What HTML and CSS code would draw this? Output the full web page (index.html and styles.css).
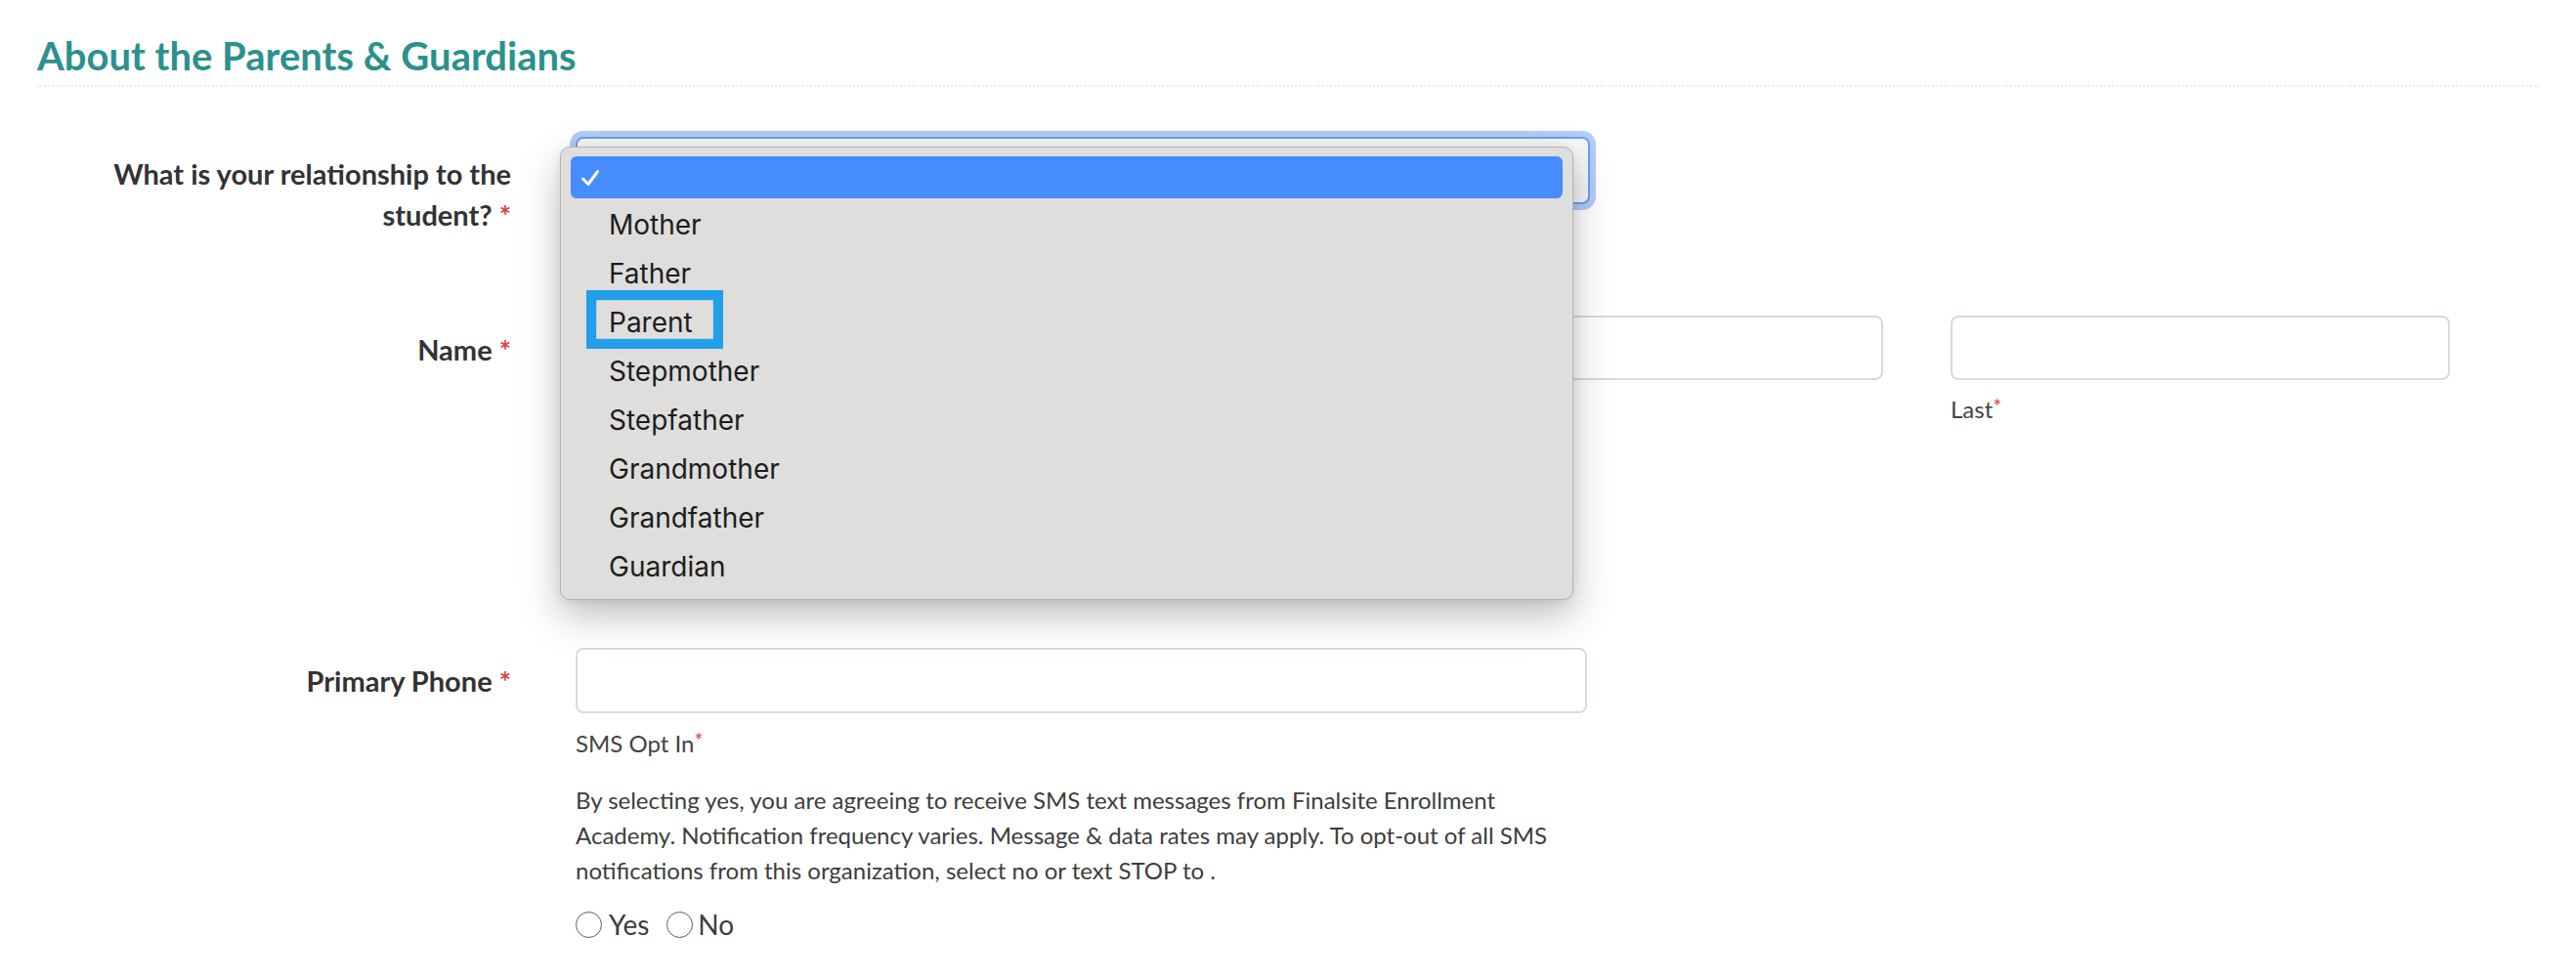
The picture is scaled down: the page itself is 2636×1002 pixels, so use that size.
FILE: index.html
```html
<!DOCTYPE html>
<html lang="en">
<head>
<meta charset="utf-8">
<title>About the Parents &amp; Guardians</title>
<link rel="stylesheet" href="styles.css">
</head>
<body>
<section class="form">
  <h2 class="title">About the Parents &amp; Guardians</h2>

  <div class="row row-rel">
    <div class="lbl">What is your relationship to the student? <span class="req">*</span></div>
    <div class="ctl">
      <div class="select-wrap">
        <div class="select"></div>
        <div class="menu">
          <div class="opt opt-checked">
            <svg class="check" width="20" height="18" viewBox="0 0 20 18"><polyline points="2.5,10 8,15.5 17.5,2.5" fill="none" stroke="#fff" stroke-width="3" stroke-linecap="round" stroke-linejoin="round"/></svg>
          </div>
          <div class="opt">Mother</div>
          <div class="opt">Father</div>
          <div class="opt opt-marked">Parent<span class="mark"></span></div>
          <div class="opt">Stepmother</div>
          <div class="opt">Stepfather</div>
          <div class="opt">Grandmother</div>
          <div class="opt">Grandfather</div>
          <div class="opt">Guardian</div>
        </div>
      </div>
    </div>
  </div>

  <div class="row row-name">
    <div class="lbl">Name <span class="req">*</span></div>
    <div class="ctl name-grid">
      <div class="field"><div class="input"></div><div class="sub"></div></div>
      <div class="field"><div class="input"></div><div class="sub"></div></div>
      <div class="field"><div class="input"></div><div class="sub">Last<span class="sreq">*</span></div></div>
    </div>
  </div>

  <div class="row row-phone">
    <div class="lbl">Primary Phone <span class="req">*</span></div>
    <div class="ctl">
      <div class="input phone"></div>
      <div class="sub sms">SMS Opt In<span class="sreq">*</span></div>
      <p class="note">By selecting yes, you are agreeing to receive SMS text messages from Finalsite Enrollment Academy. Notification frequency varies. Message &amp; data rates may apply. To opt-out of all SMS notifications from this organization, select no or text STOP to .</p>
      <div class="radios">
        <label class="radio"><span class="dot"></span><span class="rtext">Yes</span></label>
        <label class="radio"><span class="dot"></span><span class="rtext">No</span></label>
      </div>
    </div>
  </div>
</section>
</body>
</html>
```
FILE: styles.css
```css
* { box-sizing: border-box; }
html, body { margin: 0; background: #ffffff; }
body {
  font-family: "Lato", "Liberation Sans", sans-serif;
  color: #333333;
}
.form { padding: 32px 38px 0 38px; }
.title {
  margin: 0;
  font-size: 40px;
  line-height: 50px;
  font-weight: 700;
  color: #2b918d;
  padding-bottom: 5px;
  border-bottom: 2px dotted #ececec;
}
.row {
  display: grid;
  grid-template-columns: 485px 1fr;
  column-gap: 66px;
  align-items: start;
}
.lbl {
  text-align: right;
  font-weight: 700;
  font-size: 29px;
  line-height: 42px;
  color: #333333;
}
.req { color: #d9434a; }

.row-rel { margin-top: 51px; }
.row-rel .lbl { padding-top: 17px; }

.select-wrap { position: relative; width: 1038px; }
.select {
  height: 69px;
  border: 2px solid #6a9ff2;
  border-radius: 8px;
  background: #f6f6f6;
  box-shadow: 0 0 0 6px #b3cbf6;
}
.menu {
  position: absolute;
  left: -16px;
  top: 10px;
  width: 1037px;
  background: #dfdedd;
  border: 1px solid #b5b4b3;
  border-radius: 10px;
  padding: 9px 10px 10px 10px;
  display: flex;
  flex-direction: column;
  gap: 7px;
  box-shadow: 0 16px 40px rgba(0, 0, 0, 0.26), 0 2px 8px rgba(0, 0, 0, 0.08);
  font-family: "Inter", "Liberation Sans", sans-serif;
  font-size: 28px;
  color: #1d1d1d;
  z-index: 5;
}
.opt {
  position: relative;
  height: 43px;
  line-height: 40px;
  padding-left: 39px;
  border-radius: 6px;
}
.opt-checked {
  background: #468cfd;
  display: flex;
  align-items: center;
  padding-left: 10px;
}
.check { display: block; margin-top: 1px; }
.mark {
  position: absolute;
  left: 16px;
  top: -13px;
  width: 140px;
  height: 60px;
  border: 10px solid #239ee8;
  outline: 1px dotted rgba(35, 158, 232, 0.35);
  outline-offset: -11px;
}

.row-name { margin-top: 82px; }
.row-name .lbl { padding-top: 14px; }
.name-grid {
  display: grid;
  grid-template-columns: 758px 511px 511px;
  column-gap: 69px;
}
.input {
  height: 66px;
  border: 2px solid #d5dbdf;
  border-radius: 8px;
  background: #ffffff;
}
.sub {
  margin-top: 12px;
  height: 36px;
  font-size: 24px;
  line-height: 36px;
  color: #444444;
}
.sreq {
  color: #d9434a;
  font-size: 21px;
  vertical-align: top;
  position: relative;
  top: -3px;
}

.row-phone { margin-top: 226px; }
.row-phone .lbl { padding-top: 13px; }
.input.phone { width: 1035px; height: 67px; }
.sub.sms { margin-top: 13px; }
.note {
  width: 1035px;
  margin: 22px 0 0 0;
  font-size: 24px;
  line-height: 36px;
  color: #3d3d3d;
}
.radios {
  margin-top: 19px;
  height: 36px;
  display: flex;
  align-items: center;
}
.radio {
  display: flex;
  align-items: center;
  font-size: 28px;
  color: #3d3d3d;
  margin-right: 18px;
}
.dot {
  width: 27px;
  height: 27px;
  border: 1.5px solid #5c5c5c;
  border-radius: 50%;
  background: #ffffff;
  margin-right: 7px;
}
.radio + .radio .dot { margin-right: 5px; }
```
